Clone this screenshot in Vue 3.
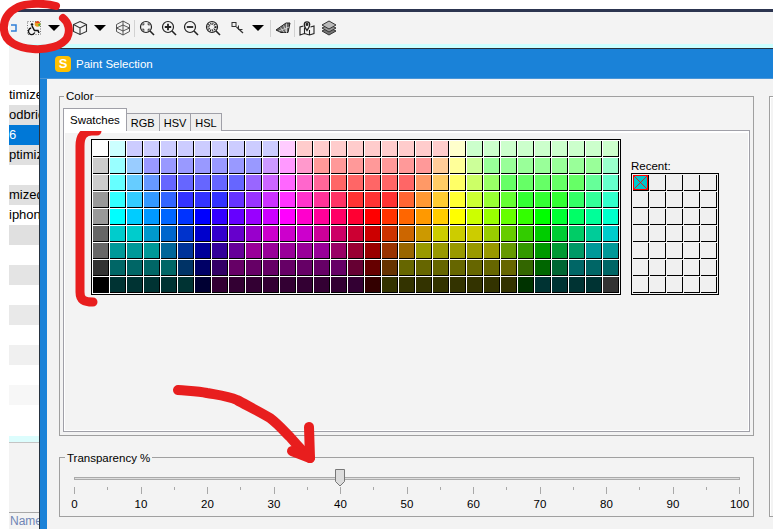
<script setup>
import { computed, ref } from "vue";

const rep = (c, n) => Array(n).fill(c).join(" ");

// 31 x 9 swatches, same order as on screen
const swatchRows = [
  `fff cff ${rep("ccf", 9)} fcf ${rep("fcc", 9)} ffc ${rep("cfc", 9)}`,
  `ccc 9ff 9cf ${rep("99f", 7)} c9f f9f f9c ${rep("f99", 7)} fc9 ff9 cf9 ${rep("9f9", 7)} 9fc`,
  `ccc 6ff 6cf 69f ${rep("66f", 5)} 96f c6f f6f f6c f69 ${rep("f66", 5)} f96 fc6 ff6 cf6 9f6 ${rep("6f6", 5)} 6f9 6fc`,
  `999 3ff 3cf 39f 36f ${rep("33f", 3)} 63f 93f c3f f3f f3c f39 f36 ${rep("f33", 3)} f63 f93 fc3 ff3 cf3 9f3 6f3 ${rep("3f3", 3)} 3f6 3f9 3fc`,
  "999 0ff 0cf 09f 06f 03f 00f 30f 60f 90f c0f f0f f0c f09 f06 f03 f00 f30 f60 f90 fc0 ff0 cf0 9f0 6f0 3f0 0f0 0f3 0f6 0f9 0fc",
  `666 0cc 0cc 09c 06c 03c 00c 30c 60c 90c ${rep("c0c", 3)} c09 c06 c03 c00 c30 c60 c90 ${rep("cc0", 3)} 9c0 6c0 3c0 0c0 0c3 0c6 0c9 0cc`,
  `666 ${rep("099", 3)} 069 039 009 309 609 ${rep("909", 5)} 906 903 900 930 960 ${rep("990", 5)} 690 390 090 093 096 099 099`,
  `333 ${rep("066", 4)} 036 006 306 ${rep("606", 7)} 603 600 630 ${rep("660", 7)} 360 060 063 066 066 066`,
  `000 ${rep("033", 5)} 003 ${rep("303", 9)} 300 ${rep("330", 8)} 030 ${rep("033", 4)} 333`,
];
const swatches = swatchRows.flatMap((r) => r.split(" ")).map((c) => "#" + c);

const recentCount = 35;
const tabs = ["Swatches", "RGB", "HSV", "HSL"];

const listRows = [
  { text: "timized", cls: "" },
  { text: "odbridge", cls: "g1" },
  { text: "6", cls: "sel" },
  { text: "ptimized", cls: "g1" },
  { text: "", cls: "" },
  { text: "mized", cls: "g1" },
  { text: "iphone", cls: "" },
  { text: "", cls: "g1" },
  { text: "", cls: "" },
  { text: "", cls: "g2" },
  { text: "", cls: "" },
  { text: "", cls: "g3" },
  { text: "", cls: "" },
  { text: "", cls: "g4" },
  { text: "", cls: "" },
  { text: "", cls: "g5" },
];

const transparency = ref(40);
const thumbLeft = computed(() => transparency.value + "%");
const ticks = Array.from({ length: 21 }, (_, i) => i * 5);
const labels = ticks.filter((t) => t % 10 === 0);
</script>

<template>
  <div class="page">
    <div class="top-white"></div>
    <div class="dark-bar"></div>

    <div class="toolbar">
      <svg class="clip-icon" width="6" height="12" viewBox="0 0 6 12"><path d="M0 3h5v6H0" fill="none" stroke="#2f7fd8" stroke-width="1.5" /></svg>

      <span class="tool">
        <svg width="16" height="16" viewBox="0 0 16 16">
          <rect x="1.500" y="1.500" width="13" height="13" fill="none" stroke="#777" stroke-dasharray="1 1.500" />
          <circle cx="6" cy="4.500" r="1.300" fill="#111" />
          <path d="M6 6l2.500 4.500H12l1 2.500" fill="none" stroke="#111" stroke-width="1.500" />
          <path d="M5.200 8a3.300 3.300 0 1 0 3.600 4.600" fill="none" stroke="#111" stroke-width="1.300" />
          <circle cx="11.500" cy="4" r="2.800" fill="#e8a020" />
          <path d="M9 2.800a2.800 2.800 0 0 1 5 0z" fill="#e02020" />
          <path d="M14.300 3.200a2.800 2.800 0 0 1-1.300 3.400l-1-2z" fill="#40b030" />
        </svg>
      </span>
      <span class="tri-wrap"><i class="tri"></i></span>

      <span class="tool ml6">
        <svg width="16" height="16" viewBox="0 0 16 16" fill="none" stroke="#333" stroke-width="1.100">
          <path d="M8 1.500l6.500 3v7L8 14.500l-6.500-3v-7z" />
          <path d="M1.500 4.500L8 8l6.500-3.500M8 8v6.500" />
        </svg>
      </span>
      <span class="tri-wrap"><i class="tri"></i></span>

      <span class="tool ml3">
        <svg width="16" height="16" viewBox="0 0 16 16" fill="none" stroke="#444" stroke-width=".9">
          <path d="M8 1l6.500 3.500v7L8 15l-6.500-3.500v-7z" />
          <path d="M1.500 8L8 5l6.500 3L8 11zM8 1v14" />
        </svg>
      </span>
      <i class="sep"></i>

      <span class="tool">
        <svg width="16" height="16" viewBox="0 0 16 16" fill="none" stroke="#222">
          <circle cx="7" cy="7" r="5.500" stroke-width="1.200" />
          <path d="M11 11l4 4" stroke-width="1.600" />
          <path d="M4 5.500V4h1.500M8.500 4H10v1.500M10 8.500V10H8.500M5.500 10H4V8.500" stroke-width="1" />
        </svg>
      </span>
      <span class="tool">
        <svg width="16" height="16" viewBox="0 0 16 16" fill="none" stroke="#222">
          <circle cx="7" cy="7" r="5.500" stroke-width="1.200" />
          <path d="M11 11l4 4" stroke-width="1.600" />
          <path d="M3.800 7h6.400M7 3.800v6.400" stroke-width="1.800" />
        </svg>
      </span>
      <span class="tool">
        <svg width="16" height="16" viewBox="0 0 16 16" fill="none" stroke="#222">
          <circle cx="7" cy="7" r="5.500" stroke-width="1.200" />
          <path d="M11 11l4 4" stroke-width="1.600" />
          <path d="M3.800 7h6.400" stroke-width="1.800" />
        </svg>
      </span>
      <span class="tool">
        <svg width="16" height="16" viewBox="0 0 16 16" fill="none" stroke="#222">
          <circle cx="7" cy="7" r="5.500" stroke-width="1.200" />
          <path d="M11 11l4 4" stroke-width="1.600" />
          <circle cx="7" cy="7" r="3.400" stroke-width="2.200" stroke-dasharray="1 1" />
        </svg>
      </span>

      <span class="tool ml3">
        <svg width="16" height="16" viewBox="0 0 16 16" fill="none" stroke="#333">
          <rect x="2" y="2.500" width="4" height="4" stroke-width="1" />
          <path d="M6.500 7l6.500 6" stroke-width="1.300" />
          <path d="M8.500 5.500v4h4" stroke-width="1" />
        </svg>
      </span>
      <span class="tri-wrap"><i class="tri"></i></span>
      <i class="sep ml3"></i>

      <span class="tool">
        <svg width="16" height="16" viewBox="0 0 16 16" fill="none" stroke="#222" stroke-width="1">
          <path d="M1 10L11 3h4l-2 9.500H6z" fill="#666" />
          <path d="M3.800 11L14.200 7M5.500 7.500l3.500 5M8.500 5.500l3 7M11.500 3.500l0 9" stroke="#eee" stroke-width=".7" />
        </svg>
      </span>
      <i class="sep"></i>
      <span class="tool">
        <svg width="16" height="16" viewBox="0 0 16 16" fill="none" stroke="#222" stroke-width="1.100">
          <path d="M4.500 6L1 7v8l4.500-1.500 5 1.500 4.500-1.500V6l-3.500 1M5.500 7.500v6M10.500 10v5" />
          <path d="M8 10.500C6.400 8 5.300 6.600 5.300 4.500a2.700 2.700 0 0 1 5.400 0C10.700 6.600 9.600 8 8 10.500z" stroke-width="1.300" />
          <circle cx="8" cy="4.500" r=".9" fill="#222" />
        </svg>
      </span>
      <span class="tool">
        <svg width="16" height="16" viewBox="0 0 16 16" stroke="#333" stroke-width="1">
          <path d="M1 11l7-3.500 7 3.500-7 4z" fill="#777" />
          <path d="M1 8l7-3.500L15 8l-7 4z" fill="#999" />
          <path d="M1 5l7-4 7 4-7 4z" fill="#bbb" />
        </svg>
      </span>
    </div>

    <div class="cyan-strip"></div>

    <div class="body">
      <div class="list">
        <div class="list-gap"></div>
        <div v-for="(row, i) in listRows" :key="i" class="list-row" :class="row.cls">{{ row.text }}</div>
        <div class="list-fill"></div>
        <div class="list-cyan"></div>
        <div class="list-panel"></div>
        <div class="list-head">Name</div>
      </div>

      <div class="window">
        <div class="titlebar">
          <span class="app-icon">S</span>
          <span>Paint Selection</span>
        </div>

        <div class="content">
          <div class="left-col">
            <fieldset class="group">
              <legend>Color</legend>
              <div class="tabs">
                <span v-for="(t, i) in tabs" :key="t" class="tab" :class="{ active: i === 0 }">{{ t }}</span>
              </div>
              <div class="tab-panel">
                <div class="swatch-grid">
                  <span v-for="(c, i) in swatches" :key="i" class="swatch" :style="{ background: c }"></span>
                </div>
                <div class="recent">
                  <div class="recent-label">Recent:</div>
                  <div class="recent-grid">
                    <span v-for="n in recentCount" :key="n" class="swatch recent-cell">
                      <svg v-if="n === 1" width="15" height="15" viewBox="0 0 15 15">
                        <rect x=".5" y=".5" width="14" height="14" fill="#00c4cc" stroke="#f00" />
                        <path d="M1 1l13 13M14 1L1 14" stroke="#f00" stroke-width=".8" />
                      </svg>
                    </span>
                  </div>
                </div>
              </div>
            </fieldset>

            <fieldset class="group transparency">
              <legend>Transparency %</legend>
              <div class="slider">
                <div class="track"></div>
                <svg class="thumb" :style="{ left: thumbLeft }" width="12" height="18" viewBox="0 0 12 18">
                  <path d="M1.500.5h9v12l-4.500 4.500-4.500-4.500z" fill="#dcdcdc" stroke="#777" />
                </svg>
                <div class="ticks">
                  <i v-for="t in ticks" :key="t" class="tick" :class="{ major: t % 10 === 0 }"></i>
                </div>
                <div class="labels">
                  <span v-for="l in labels" :key="l" class="label"><span>{{ l }}</span></span>
                </div>
              </div>
            </fieldset>
          </div>

          <div class="side-panel"></div>
        </div>
      </div>
    </div>

    <!-- hand drawn marks over the screenshot -->
    <svg class="marks" width="773" height="529" viewBox="0 0 773 529" fill="none" stroke="#e81e1e" stroke-linecap="round" stroke-linejoin="round">
      <path d="M56 6C45 3 28 3 18 7 8 12 3 20 4 30c1 12 14 18 29 19 15 1 29-3 34-11 4-8 1-16-4-20" stroke-width="8" />
      <path d="M97 131h-5c-8 0-12 5-12 15v146c0 8 4 10 13 10" stroke-width="9" />
      <path d="M178 390c10 1 20 1 29 3 11 2 21 3 30 7 11 6 23 12 33 18 8 6 14 13 20 19 7 8 13 15 20 21" stroke-width="10" />
      <path d="M309 427l1 31-18-7" stroke-width="10" />
    </svg>
  </div>
</template>

<style>
html, body {
  margin: 0;
  background: #fff;
}
</style>

<style scoped>
.page {
  position: relative;
  width: 773px;
  height: 529px;
  overflow: hidden;
  display: flex;
  flex-direction: column;
  padding-left: 9px;
  box-sizing: border-box;
  background: #fff;
  font-family: "Liberation Sans", Arial, sans-serif;
  font-size: 11.5px;
  color: #000;
}
.top-white {
  height: 9px;
  flex: none;
}
.dark-bar {
  height: 3px;
  flex: none;
  background: #2c3550;
}
.toolbar {
  height: 32px;
  flex: none;
  display: flex;
  align-items: center;
  padding-left: 2px;
  background: #f3f3f3;
}
.clip-icon {
  flex: none;
  width: 6px;
  margin-right: 5.5px;
}
.tool {
  width: 22px;
  flex: none;
  display: flex;
  justify-content: center;
}
.tri-wrap {
  width: 18px;
  flex: none;
  display: flex;
  justify-content: center;
}
.tri {
  width: 0;
  height: 0;
  border-left: 6px solid transparent;
  border-right: 6px solid transparent;
  border-top: 6px solid #000;
}
.sep {
  width: 1px;
  height: 17px;
  flex: none;
  margin-right: 1px;
  background: #d2d2d2;
}
.ml3 { margin-left: 3px; }
.ml6 { margin-left: 6px; }

.cyan-strip {
  height: 4px;
  flex: none;
  background: #ccffff;
}
.body {
  flex: 1;
  min-height: 0;
  display: flex;
}

.list {
  width: 30px;
  flex: none;
  display: flex;
  flex-direction: column;
  overflow: hidden;
  background: #fff;
  font-size: 13px;
}
.list-gap {
  height: 37px;
  flex: none;
  background: #f3f3f3;
}
.list-row {
  height: 20px;
  flex: none;
  line-height: 20px;
  white-space: nowrap;
}
.g1 { background: #e0e0e0; }
.g2 { background: #e4e4e4; }
.g3 { background: #e9e9e9; }
.g4 { background: #f0f0f0; }
.g5 { background: #f7f7f7; }
.sel {
  background: #0078d7;
  color: #fff;
}
.list-fill {
  height: 31px;
  flex: none;
}
.list-cyan {
  height: 6px;
  flex: none;
  background: #dcfdfd;
  border-bottom: 1px solid #c4c4c4;
}
.list-panel {
  height: 69px;
  flex: none;
  background: #f3f3f3;
}
.list-head {
  flex: 1;
  border-top: 1px solid #a8a8a8;
  background: #f3f3f3;
  color: #6f85b5;
  font-size: 12px;
  line-height: 17px;
  padding-left: 1px;
  white-space: nowrap;
}

.window {
  flex: 1;
  min-width: 0;
  display: flex;
  flex-direction: column;
  border-top: 1px solid #26323f;
  border-left: 1px solid #26323f;
  box-sizing: border-box;
}
.titlebar {
  height: 30px;
  flex: none;
  display: flex;
  align-items: center;
  gap: 5px;
  padding-left: 15px;
  background: #1a82d8;
  border-bottom: 1px solid #4a96d8;
  color: #fff;
  box-sizing: border-box;
}
.app-icon {
  width: 16px;
  height: 16px;
  border-radius: 4px;
  background: #ffc000;
  color: #fff;
  font-weight: bold;
  font-size: 13px;
  line-height: 16px;
  text-align: center;
}
.content {
  flex: 1;
  min-height: 0;
  display: flex;
  gap: 15px;
  padding: 10px 0 0 12px;
  border-left: 7px solid #1a82d8;
  background: #f3f3f3;
}
.left-col {
  width: 695px;
  flex: none;
  display: flex;
  flex-direction: column;
}
.group {
  margin: 0;
  min-width: 0;
  padding: 5px 3px 3px 3px;
  border: 1px solid #a0a0a0;
  box-sizing: border-box;
}
.group legend {
  margin-left: 1px;
  padding: 0 2px;
  line-height: 14px;
}
.tabs {
  height: 23px;
  display: flex;
  align-items: flex-end;
  position: relative;
  z-index: 1;
}
.tab {
  height: 18px;
  box-sizing: border-box;
  padding: 0 4px;
  font-size: 11px;
  line-height: 18px;
  background: #efefef;
  border: 1px solid #a0a0a8;
  border-bottom: none;
  margin-left: -1px;
}
.tab:first-child {
  margin-left: 0;
}
.tab.active {
  height: 23px;
  padding: 0 6px;
  font-size: 11.5px;
  line-height: 22px;
  background: #fff;
}
.tab-panel {
  height: 302px;
  box-sizing: border-box;
  margin-top: -1px;
  padding: 8px 0 0 27px;
  display: flex;
  align-items: flex-start;
  gap: 10px;
  border: 1px solid #a0a0a8;
  box-shadow: inset 1px 2px 0 #fff, inset -1px -1px 0 #fff;
}
.swatch-grid {
  display: grid;
  grid-template-columns: repeat(31, 16px);
  grid-auto-rows: 16px;
  gap: 1px;
  padding: 1px;
  border: 1px solid #000;
  background: #fff;
}
.swatch {
  display: block;
  box-sizing: border-box;
  border-right: 1px solid #000;
  border-bottom: 1px solid #000;
}
.recent {
  height: 156px;
  display: flex;
  flex-direction: column;
  justify-content: flex-end;
}
.recent-label {
  line-height: 14px;
}
.recent-grid {
  display: grid;
  grid-template-columns: repeat(5, 16px);
  grid-auto-rows: 16px;
  gap: 1px;
  padding: 1px;
  border: 1px solid #000;
  background: #f2f2f2;
}
.recent-cell {
  background: #f0f0f0;
}
.recent-cell svg {
  display: block;
}

.transparency {
  margin-top: 13px;
  padding: 14px 13px 5px 14px;
}
.transparency legend {
  margin-left: -9px;
  padding-top: 2px;
  margin-bottom: -2px;
}
.slider {
  position: relative;
  width: 666px;
}
.track {
  height: 3px;
  box-sizing: border-box;
  border: 1px solid #aaa;
  background: #ddd;
}
.thumb {
  position: absolute;
  top: -8px;
  transform: translateX(-50%);
}
.ticks {
  display: flex;
  justify-content: space-between;
  margin-top: 7px;
  height: 8px;
  align-items: flex-start;
}
.tick {
  width: 1px;
  height: 3px;
  background: #a8a8a8;
}
.tick.major {
  height: 7px;
}
.labels {
  display: flex;
  justify-content: space-between;
  margin-top: 2px;
  line-height: 14px;
}
.label {
  width: 1px;
  display: flex;
  justify-content: center;
}

.side-panel {
  width: 30px;
  height: 421px;
  flex: none;
  margin-top: 7px;
  border: 1px solid #a0a0a0;
  box-shadow: inset 1px 1px 0 #fff;
  box-sizing: border-box;
}
.marks {
  position: absolute;
  left: 0;
  top: 0;
  pointer-events: none;
}
</style>
